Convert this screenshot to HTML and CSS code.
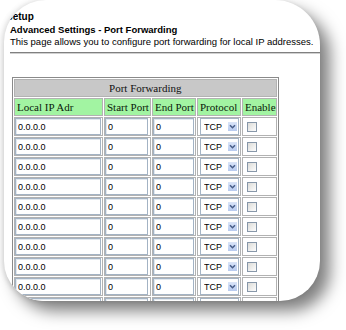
FILE: index.html
```html
<!DOCTYPE html>
<html>
<head>
<meta charset="utf-8">
<link rel="stylesheet" href="styles.css">
</head>
<body>
<div class="card">
  <div class="content">
    <h1 class="title">Setup</h1>
    <h2 class="subtitle">Advanced Settings - Port Forwarding</h2>
    <p class="desc">This page allows you to configure port forwarding for local IP addresses.</p>
    <div class="rule"></div>
    <table class="pf">
      <tr><th colspan="5" class="cap">Port Forwarding</th></tr>
      <tr class="head">
        <td class="c1">Local IP Adr</td>
        <td class="c2">Start Port</td>
        <td class="c3">End Port</td>
        <td class="c4">Protocol</td>
        <td class="c5">Enable</td>
      </tr>
      <tr><td><input class="ip" type="text" value="0.0.0.0"></td><td><input class="sp" type="text" value="0"></td><td><input class="ep" type="text" value="0"></td><td><span class="sel"><select><option>TCP</option><option>UDP</option></select><span class="btn"><svg width="9" height="9" viewBox="0 0 9 9"><path d="M2 3.2 L4.5 5.7 L7 3.2" fill="none" stroke="#4a5f8a" stroke-width="1.5"/></svg></span></span></td><td><input class="chk" type="checkbox"></td></tr>
      <tr><td><input class="ip" type="text" value="0.0.0.0"></td><td><input class="sp" type="text" value="0"></td><td><input class="ep" type="text" value="0"></td><td><span class="sel"><select><option>TCP</option><option>UDP</option></select><span class="btn"><svg width="9" height="9" viewBox="0 0 9 9"><path d="M2 3.2 L4.5 5.7 L7 3.2" fill="none" stroke="#4a5f8a" stroke-width="1.5"/></svg></span></span></td><td><input class="chk" type="checkbox"></td></tr>
      <tr><td><input class="ip" type="text" value="0.0.0.0"></td><td><input class="sp" type="text" value="0"></td><td><input class="ep" type="text" value="0"></td><td><span class="sel"><select><option>TCP</option><option>UDP</option></select><span class="btn"><svg width="9" height="9" viewBox="0 0 9 9"><path d="M2 3.2 L4.5 5.7 L7 3.2" fill="none" stroke="#4a5f8a" stroke-width="1.5"/></svg></span></span></td><td><input class="chk" type="checkbox"></td></tr>
      <tr><td><input class="ip" type="text" value="0.0.0.0"></td><td><input class="sp" type="text" value="0"></td><td><input class="ep" type="text" value="0"></td><td><span class="sel"><select><option>TCP</option><option>UDP</option></select><span class="btn"><svg width="9" height="9" viewBox="0 0 9 9"><path d="M2 3.2 L4.5 5.7 L7 3.2" fill="none" stroke="#4a5f8a" stroke-width="1.5"/></svg></span></span></td><td><input class="chk" type="checkbox"></td></tr>
      <tr><td><input class="ip" type="text" value="0.0.0.0"></td><td><input class="sp" type="text" value="0"></td><td><input class="ep" type="text" value="0"></td><td><span class="sel"><select><option>TCP</option><option>UDP</option></select><span class="btn"><svg width="9" height="9" viewBox="0 0 9 9"><path d="M2 3.2 L4.5 5.7 L7 3.2" fill="none" stroke="#4a5f8a" stroke-width="1.5"/></svg></span></span></td><td><input class="chk" type="checkbox"></td></tr>
      <tr><td><input class="ip" type="text" value="0.0.0.0"></td><td><input class="sp" type="text" value="0"></td><td><input class="ep" type="text" value="0"></td><td><span class="sel"><select><option>TCP</option><option>UDP</option></select><span class="btn"><svg width="9" height="9" viewBox="0 0 9 9"><path d="M2 3.2 L4.5 5.7 L7 3.2" fill="none" stroke="#4a5f8a" stroke-width="1.5"/></svg></span></span></td><td><input class="chk" type="checkbox"></td></tr>
      <tr><td><input class="ip" type="text" value="0.0.0.0"></td><td><input class="sp" type="text" value="0"></td><td><input class="ep" type="text" value="0"></td><td><span class="sel"><select><option>TCP</option><option>UDP</option></select><span class="btn"><svg width="9" height="9" viewBox="0 0 9 9"><path d="M2 3.2 L4.5 5.7 L7 3.2" fill="none" stroke="#4a5f8a" stroke-width="1.5"/></svg></span></span></td><td><input class="chk" type="checkbox"></td></tr>
      <tr><td><input class="ip" type="text" value="0.0.0.0"></td><td><input class="sp" type="text" value="0"></td><td><input class="ep" type="text" value="0"></td><td><span class="sel"><select><option>TCP</option><option>UDP</option></select><span class="btn"><svg width="9" height="9" viewBox="0 0 9 9"><path d="M2 3.2 L4.5 5.7 L7 3.2" fill="none" stroke="#4a5f8a" stroke-width="1.5"/></svg></span></span></td><td><input class="chk" type="checkbox"></td></tr>
      <tr><td><input class="ip" type="text" value="0.0.0.0"></td><td><input class="sp" type="text" value="0"></td><td><input class="ep" type="text" value="0"></td><td><span class="sel"><select><option>TCP</option><option>UDP</option></select><span class="btn"><svg width="9" height="9" viewBox="0 0 9 9"><path d="M2 3.2 L4.5 5.7 L7 3.2" fill="none" stroke="#4a5f8a" stroke-width="1.5"/></svg></span></span></td><td><input class="chk" type="checkbox"></td></tr>
      <tr><td><input class="ip" type="text" value="0.0.0.0"></td><td><input class="sp" type="text" value="0"></td><td><input class="ep" type="text" value="0"></td><td><span class="sel"><select><option>TCP</option><option>UDP</option></select><span class="btn"><svg width="9" height="9" viewBox="0 0 9 9"><path d="M2 3.2 L4.5 5.7 L7 3.2" fill="none" stroke="#4a5f8a" stroke-width="1.5"/></svg></span></span></td><td><input class="chk" type="checkbox"></td></tr>
    </table>
  </div>
</div>
</body>
</html>
```
FILE: styles.css
```css
html, body {
  margin: 0;
  padding: 0;
  background: #fff;
}
body {
  width: 346px;
  height: 330px;
  overflow: hidden;
}
.card {
  margin: 0 0 0 4px;
  width: 316px;
  height: 301px;
  background: #fff;
  border-radius: 42px 45px 40px 40px;
  overflow: hidden;
  box-shadow: 10px 10px 16px rgba(0, 0, 0, 0.5), -2px 0 5px rgba(0, 0, 0, 0.12);
}
.content {
  padding: 10px 0 0 6px;
}
.title {
  margin: 0 0 0 -4px;
  font: bold 10px/13px "Liberation Sans", Arial, sans-serif;
  color: #000;
}
.subtitle {
  margin: 0;
  font: bold 9.5px/13px "Liberation Sans", Arial, sans-serif;
  color: #000;
  white-space: nowrap;
}
.desc {
  margin: 0;
  font: 9.5px/12px "Liberation Sans", Arial, sans-serif;
  color: #000;
  white-space: nowrap;
}
.rule {
  margin-top: 4px;
  height: 0;
  border-top: 1px solid #808080;
  border-bottom: 1px solid #d0d0d0;
}
.pf {
  margin: 23px 0 0 2px;
  border: 1px solid #8a8a8a;
  border-collapse: separate;
  border-spacing: 1px;
}
.pf td, .pf th {
  border: 1px solid #b2b2b2;
  padding: 0;
}
.pf .cap {
  height: 16px;
  background: #c8c8c8;
  font: normal 11px/16px "Liberation Serif", "Times New Roman", serif;
  color: #111;
  text-align: center;
}
.head td {
  height: 16px;
  background: #a2f4a2;
  font: 11px/16px "Liberation Serif", "Times New Roman", serif;
  color: #0a1a0a;
  padding-left: 2px;
  white-space: nowrap;
  text-align: left;
}
.head .c1 { width: 85px; }
.head .c2 { width: 43px; }
.head .c3 { width: 40px; }
.head .c4 { width: 40px; }
.head .c5 { width: 30px; }
.pf tr:not(.head) td {
  vertical-align: top;
}
input[type="text"] {
  display: block;
  box-sizing: border-box;
  height: 17px;
  margin: 0;
  padding: 0 0 0 2px;
  border: 1px solid #a3b3c4;
  box-shadow: inset 1px 1px 0 #e2e8ee;
  font: 9px "Liberation Sans", Arial, sans-serif;
  color: #000;
  background: #fff;
}
.ip { width: 86px; }
.sp { width: 43px; }
.ep { width: 41px; }
.sel {
  display: block;
  position: relative;
  margin-left: 2px;
  width: 39px;
}
.sel select {
  display: block;
  -webkit-appearance: none;
  appearance: none;
  box-sizing: border-box;
  width: 39px;
  height: 17px;
  margin: 0;
  padding: 0 0 0 3px;
  border: 1px solid #a3b3c4;
  border-radius: 0;
  background: #fff;
  font: 9px "Liberation Sans", Arial, sans-serif;
  color: #000;
}
.btn {
  position: absolute;
  right: 2px;
  top: 4px;
  width: 9px;
  height: 9px;
  background: linear-gradient(#dbe5f8, #b7caef);
  pointer-events: none;
  display: flex;
}
.chk {
  display: block;
  -webkit-appearance: none;
  appearance: none;
  box-sizing: border-box;
  width: 10px;
  height: 10px;
  margin: 4px 0 0 4px;
  border: 1px solid #8797a9;
  background: linear-gradient(135deg, #dcdcd8, #fdfdfd);
}
```
